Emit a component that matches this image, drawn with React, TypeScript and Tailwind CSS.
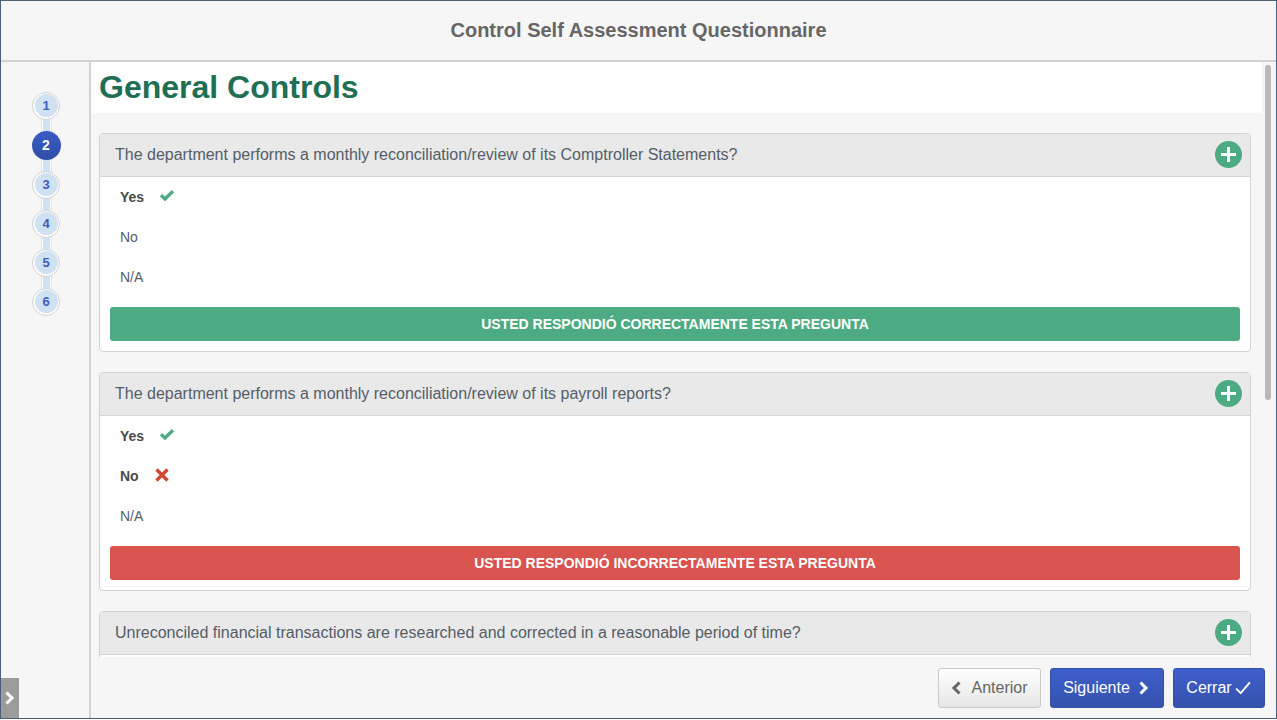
type Answer = { label: string; selected?: boolean; mark?: "ok" | "bad" };

const questions: { text: string; answers: Answer[]; result?: "ok" | "bad" }[] = [
  {
    text: "The department performs a monthly reconciliation/review of its Comptroller Statements?",
    answers: [
      { label: "Yes", selected: true, mark: "ok" },
      { label: "No" },
      { label: "N/A" },
    ],
    result: "ok",
  },
  {
    text: "The department performs a monthly reconciliation/review of its payroll reports?",
    answers: [
      { label: "Yes", selected: true, mark: "ok" },
      { label: "No", selected: true, mark: "bad" },
      { label: "N/A" },
    ],
    result: "bad",
  },
  {
    text: "Unreconciled financial transactions are researched and corrected in a reasonable period of time?",
    answers: [],
  },
];

function OkIcon({ className }: { className: string }) {
  return (
    <svg viewBox="0 0 14 11" className={className} fill="none" stroke="currentColor" strokeWidth="3.4">
      <path d="M1 5.2 L5 9 L13 1.2" />
    </svg>
  );
}

function BadIcon({ className }: { className: string }) {
  return (
    <svg viewBox="0 0 14 14" className={className} fill="none" stroke="currentColor" strokeWidth="3.4">
      <path d="M1.5 1.5 L12.5 12.5 M12.5 1.5 L1.5 12.5" />
    </svg>
  );
}

function ChevronLeft({ className }: { className: string }) {
  return (
    <svg viewBox="0 0 10 14" className={className} fill="none" stroke="currentColor" strokeWidth="3">
      <path d="M8.5 1.5 L3 7 L8.5 12.5" />
    </svg>
  );
}

function ChevronRight({ className }: { className: string }) {
  return (
    <svg viewBox="0 0 10 14" className={className} fill="none" stroke="currentColor" strokeWidth="3">
      <path d="M1.5 1.5 L7 7 L1.5 12.5" />
    </svg>
  );
}

function Stepper() {
  return (
    <div className="relative flex flex-col items-center pt-[24px] pl-[2px]">
      <div className="absolute top-[36px] left-[41px] w-[9px] h-[197px] bg-[#d0e2f1] border-x border-x-white shadow-[0_0_0_1px_#e2e2e2]" />
      {[1, 2, 3, 4, 5, 6].map((n) =>
        n === 2 ? (
          <div key={n} className="relative h-[40px] flex items-center justify-center">
            <div className="w-[29px] h-[29px] rounded-full bg-gradient-to-b from-[#3a5cc6] to-[#2f4ea8] flex items-center justify-center text-white text-[14px] font-bold">
              {n}
            </div>
          </div>
        ) : (
          <div key={n} className="relative h-[39px] flex items-center justify-center">
            <div className="w-[28px] h-[28px] rounded-full border border-[#d2d2d2] bg-white flex items-center justify-center">
              <div className="w-[23px] h-[23px] rounded-full bg-[#d0e2f1] flex items-center justify-center text-[#3b5cc4] text-[13px] font-bold">
                {n}
              </div>
            </div>
          </div>
        ),
      )}
    </div>
  );
}

function PlusBadge() {
  return (
    <div className="relative -mt-[1px] w-[27px] h-[27px] rounded-full bg-[#4cab82] shrink-0">
      <div className="absolute left-[6px] top-[12px] w-[15px] h-[3px] bg-white" />
      <div className="absolute left-[12px] top-[6px] w-[3px] h-[15px] bg-white" />
    </div>
  );
}

function QuestionCard({ text, answers, result }: (typeof questions)[number]) {
  return (
    <div className="mb-[20px] border border-[#d3d3d3] rounded-[4px] bg-white shrink-0">
      <div className="h-[43px] bg-[#e9e9e9] border-b border-[#d3d3d3] rounded-t-[4px] flex items-center justify-between pl-[15px] pr-[8px]">
        <span className="text-[16px] text-[#555e68]">{text}</span>
        <PlusBadge />
      </div>
      <div className="pl-[20px] min-h-[40px]">
        {answers.map((a) => (
          <div key={a.label} className="h-[40px] flex items-center text-[14px] text-[#555e68]">
            <span className={a.selected ? "font-bold text-[#4a4a4a]" : ""}>{a.label}</span>
            {a.mark === "ok" && <OkIcon className="ml-[16px] -mt-[3px] w-[14px] h-[11px] text-[#4cab82]" />}
            {a.mark === "bad" && <BadIcon className="ml-[16px] -mt-[3px] w-[14px] h-[14px] text-[#d0492f]" />}
          </div>
        ))}
      </div>
      {result && (
        <div className="p-[10px]">
          <div
            className={
              result === "ok"
                ? "h-[34px] rounded-[3px] bg-[#4cab82] flex items-center justify-center text-white text-[14px] font-bold"
                : "h-[34px] rounded-[3px] bg-[#d9534f] flex items-center justify-center text-white text-[14px] font-bold"
            }
          >
            {result === "ok"
              ? "USTED RESPONDIÓ CORRECTAMENTE ESTA PREGUNTA"
              : "USTED RESPONDIÓ INCORRECTAMENTE ESTA PREGUNTA"}
          </div>
        </div>
      )}
    </div>
  );
}

export default function App() {
  return (
    <div className="h-[719px] flex flex-col overflow-hidden bg-[#f6f6f6] border border-[#4a5f78] font-['Liberation_Sans',Arial,sans-serif]">
      <header className="h-[61px] shrink-0 flex items-center justify-center pb-[2px] border-b-2 border-[#d2d2d2] text-[20px] font-bold text-[#666666]">
        Control Self Assessment Questionnaire
      </header>
      <div className="relative flex-1 flex min-h-0">
        <aside className="w-[90px] shrink-0 border-r-2 border-[#d2d2d2]">
          <Stepper />
        </aside>
        <main className="flex-1 min-w-0 flex flex-col">
          <div className="flex-1 min-h-0 overflow-hidden pr-[14px]">
            <div className="h-[51px] bg-white flex items-center pl-[8px] pb-[2px] text-[32px] font-bold text-[#1f6f54]">
              General Controls
            </div>
            <div className="pt-[20px] pl-[8px] pr-[11px] flex flex-col">
              {questions.map((q) => (
                <QuestionCard key={q.text} {...q} />
              ))}
            </div>
          </div>
          <footer className="h-[61px] shrink-0 flex items-start justify-end gap-[9px] pt-[11px] pr-[11px] text-[16px]">
            <button className="w-[103px] h-[40px] rounded-[3px] border border-[#c8c8c8] bg-gradient-to-b from-white to-[#e6e6e6] text-[#666666] flex items-center justify-center gap-[10px]">
              <ChevronLeft className="w-[10px] h-[14px]" />
              Anterior
            </button>
            <button className="w-[114px] h-[40px] rounded-[3px] border border-[#3450a8] bg-gradient-to-b from-[#3d5fcb] to-[#3652ae] text-white flex items-center justify-center gap-[9px] pr-[2px]">
              Siguiente
              <ChevronRight className="w-[10px] h-[14px]" />
            </button>
            <button className="w-[92px] h-[40px] rounded-[3px] border border-[#3450a8] bg-gradient-to-b from-[#3d5fcb] to-[#3652ae] text-white flex items-center justify-center gap-[3px] pr-[1px]">
              Cerrar
              <svg viewBox="0 0 14 12" className="w-[16px] h-[14px]" fill="none" stroke="currentColor" strokeWidth="1.7">
                <path d="M1 6.5 L5 10.5 L13 1" />
              </svg>
            </button>
          </footer>
        </main>
        <div className="absolute right-[5px] top-[3px] w-[6px] h-[335px] rounded-[3px] bg-[#b8b8b8]" />
        <div className="absolute left-0 bottom-0 w-[18px] h-[40px] bg-[#9c9c9c] flex items-center justify-center text-white">
          <ChevronRight className="w-[10px] h-[14px]" />
        </div>
      </div>
    </div>
  );
}
